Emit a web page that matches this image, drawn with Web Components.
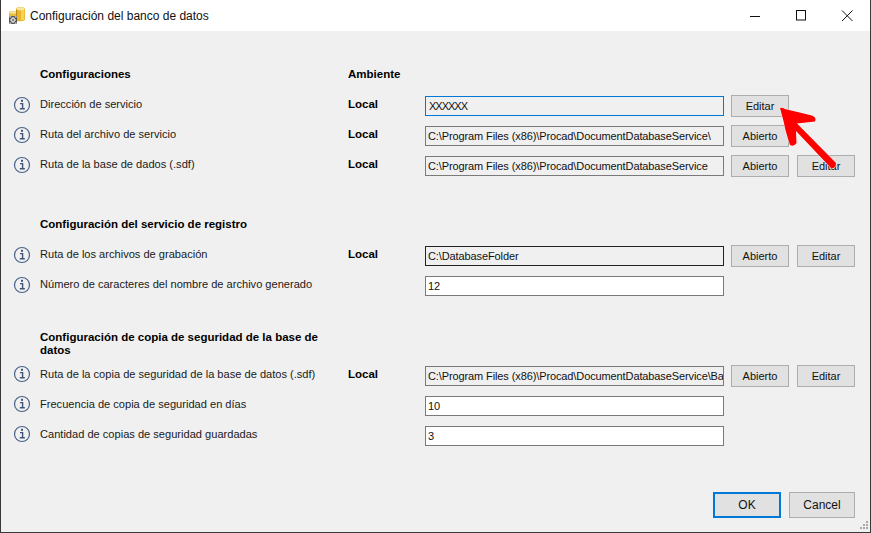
<!DOCTYPE html>
<html lang="es"><head><meta charset="utf-8"><title>Configuración del banco de datos</title>
<style>
html,body{margin:0;padding:0;width:871px;height:533px;overflow:hidden;background:#f0f0f0}
body{font:11px/16px "Liberation Sans",Arial,sans-serif;color:#000}
</style></head><body>
<cfg-window>
  <span slot="title">Configuración del banco de datos</span>
  <cfg-section style="padding-top:35px" col1="Configuraciones" col2="Ambiente" headh="16">
    <cfg-row label="Dirección de servicio" env="Local" value="XXXXXX" state="focus" edit1="Editar"></cfg-row>
    <cfg-row label="Ruta del archivo de servicio" env="Local" value="C:\Program Files (x86)\Procad\DocumentDatabaseService\" state="readonly" edit1="Abierto"></cfg-row>
    <cfg-row label="Ruta de la base de dados (.sdf)" env="Local" value="C:\Program Files (x86)\Procad\DocumentDatabaseService" state="readonly" edit1="Abierto" edit2="Editar"></cfg-row>
  </cfg-section>
  <cfg-section style="padding-top:35px" col1="Configuración del servicio de registro" headh="16">
    <cfg-row label="Ruta de los archivos de grabación" env="Local" value="C:\DatabaseFolder" state="dark" edit1="Abierto" edit2="Editar"></cfg-row>
    <cfg-row label="Número de caracteres del nombre de archivo generado" value="12"></cfg-row>
  </cfg-section>
  <cfg-section style="padding-top:29px;--icon-mt:-5px" col1="Configuración de copia de seguridad de la base de datos" headh="28">
    <cfg-row label="Ruta de la copia de seguridad de la base de datos (.sdf)" env="Local" value="C:\Program Files (x86)\Procad\DocumentDatabaseService\Ba" state="readonly" edit1="Abierto" edit2="Editar"></cfg-row>
    <cfg-row label="Frecuencia de copia de seguridad en días" value="10"></cfg-row>
    <cfg-row label="Cantidad de copias de seguridad guardadas" value="3"></cfg-row>
  </cfg-section>
</cfg-window>
<script>
class CfgWindow extends HTMLElement{constructor(){super();this.attachShadow({mode:'open'}).innerHTML=`
<style>
:host{display:flex;flex-direction:column;position:relative;box-sizing:border-box;width:871px;height:533px;border:1px solid #3a3a3a;border-top:0;background:#f0f0f0;overflow:hidden}
.bar{display:flex;align-items:center;height:31px;background:#fff;flex:none}
.logo{margin:1px 0 0 7px;width:18px;height:20px;flex:none}
.title{margin-left:4px;flex:1;font-size:12px;color:#111}
.ctl{width:46px;height:31px;display:flex;align-items:center;justify-content:center;flex:none}
.body{flex:1;min-height:0}
.foot{position:absolute;top:492px;left:712px;display:flex;gap:8px}
.arrow{position:absolute;left:769px;top:95px;width:70px;height:80px}
.grip{position:absolute;right:1px;bottom:2px;width:10px;height:10px}
</style>
<div class="bar">
<svg class="logo" viewBox="0 0 18 20"><path d="M1 6.500C1 5.500 2.800 5 5 5s4 .5 4 1.500V11H1z" fill="#e6bc3c"/><ellipse cx="5" cy="6.500" rx="3.500" ry="1.200" fill="#f6e59a"/><path d="M8 3c0-1.300 2-2 4.500-2S17 1.700 17 3v10.500c0 1-2 1.700-4.500 1.700H9V10H8z" fill="#e9b52a"/><path d="M13 3h3.300v11H13z" fill="#f5d259"/><path d="M8 3v7h1V4z" fill="#b98a14"/><ellipse cx="12.500" cy="2.800" rx="4" ry="1.500" fill="#f8e8a0"/><rect x="1" y="10" width="8" height="8" fill="#4f4f4f"/><path d="M5 10.800l3.200 3.200L5 17.200 1.800 14z" fill="#d9d9d9"/><path d="M1.300 10.800h2M6.700 10.800h2M1.300 17.200h2M6.700 17.200h2" stroke="#d9d9d9" stroke-width="1.200"/><rect x="4.200" y="13.200" width="1.600" height="1.600" fill="#4f4f4f"/></svg>
<span class="title"><slot name="title"></slot></span>
<span class="ctl"><svg width="12" height="12"><path d="M1 6.500h10" stroke="#111"/></svg></span>
<span class="ctl"><svg width="12" height="12"><rect x="1.500" y=".5" width="9" height="9.500" fill="none" stroke="#111"/></svg></span>
<span class="ctl"><svg width="12" height="12"><path d="M1 .5l10.500 10.500M11.500 .5L1 11" stroke="#111" fill="none"/></svg></span>
</div>
<div class="body"><slot></slot></div>
<div class="foot"><cfg-button primary style="width:68px;height:26px;font-size:12px">OK</cfg-button><cfg-button style="width:66px;height:26px;font-size:12px">Cancel</cfg-button></div>
<svg class="arrow" viewBox="0 0 70 80"><path d="M10 13Q12 12 15 14L42 20.500Q47 23 45 26.500L27 28.500 66 68Q66 74 61 73L26 36 26.500 48Q24 52 20 50 15 35 14 28z" fill="#f00" stroke="#fff" stroke-width=".8" stroke-linejoin="round" paint-order="stroke"/></svg>
<svg class="grip" viewBox="0 0 10 10" fill="#a8a8a8"><rect x="7" y="1" width="2" height="2"/><rect x="4" y="4" width="2" height="2"/><rect x="7" y="4" width="2" height="2"/><rect x="1" y="7" width="2" height="2"/><rect x="4" y="7" width="2" height="2"/><rect x="7" y="7" width="2" height="2"/></svg>`}}
customElements.define('cfg-window',CfgWindow);

class CfgSection extends HTMLElement{connectedCallback(){if(this.shadowRoot)return;
const r=this.attachShadow({mode:'open'});const c2=this.getAttribute('col2')||'';const h=+this.getAttribute('headh');
r.innerHTML=`<style>
:host{display:block;box-sizing:border-box}
.head{display:grid;grid-template-columns:285px auto;margin-left:39px;height:${h}px;font-weight:700;font-size:11.5px;line-height:13px;align-items:center;column-gap:23px;margin-bottom:9px}
.head.two{margin-bottom:3px}
</style><div class="head ${h>20?'two':''}"><span>${this.getAttribute('col1')}</span><span>${c2}</span></div><slot></slot>`}}
customElements.define('cfg-section',CfgSection);

class InfoIcon extends HTMLElement{constructor(){super();this.attachShadow({mode:'open'}).innerHTML=`<style>:host{display:block;width:18px;height:18px}svg{display:block}</style>
<svg width="18" height="18" viewBox="0 0 18 18"><circle cx="9" cy="9" r="7.500" fill="none" stroke="#4a6288" stroke-width="1.200"/><path d="M7 7.600h2.600v4.900M6.800 12.800h5" fill="none" stroke="#3f5478" stroke-width="1.400"/><rect x="8" y="3.800" width="2" height="2" fill="#3f5478"/></svg>`}}
customElements.define('info-icon',InfoIcon);

class CfgButton extends HTMLElement{constructor(){super();this.attachShadow({mode:'open'}).innerHTML=`<style>
:host{display:flex;box-sizing:border-box;width:58px;height:22px;align-items:center;justify-content:center;background:#e1e1e1;border:1px solid #adadad;font-size:11px;color:#111}
:host([primary]){border:2px solid #0078d7}
</style><slot></slot>`}}
customElements.define('cfg-button',CfgButton);

class CfgField extends HTMLElement{connectedCallback(){if(this.shadowRoot)return;this.attachShadow({mode:'open'}).innerHTML=`<style>
:host{display:flex;box-sizing:border-box;width:299px;height:20px;align-items:center;background:#fff;border:1px solid #7a7a7a;padding-left:2px;font-size:11px;letter-spacing:-.11px;color:#111;overflow:hidden;white-space:nowrap}
:host([state=readonly]){background:#f0f0f0}
:host([state=focus]){background:#f0f0f0;border-color:#0078d7;padding-left:3px;letter-spacing:-1px}
:host([state=dark]){background:#f0f0f0;border-color:#222}
</style><slot></slot>`}}
customElements.define('cfg-field',CfgField);

class CfgRow extends HTMLElement{connectedCallback(){if(this.shadowRoot)return;
const a=n=>this.getAttribute(n)||'';
this.attachShadow({mode:'open'}).innerHTML=`<style>
:host{display:grid;grid-template-columns:18px 317px 77px 299px 124px;height:30px;align-items:center;padding-left:12px}
.l{margin-left:9px;margin-top:-4px;white-space:nowrap;font-size:11.08px;color:#1a1a1a}
.e{font-weight:700;margin-top:-4px;font-size:11.5px}
info-icon{margin-top:var(--icon-mt,-2px)}
.btns{display:flex;gap:8px;margin-left:7px;width:124px}
</style><info-icon></info-icon><span class="l">${a('label')}</span><span class="e">${a('env')}</span><cfg-field state="${a('state')}">${a('value')}</cfg-field>
<div class="btns">${a('edit1')?`<cfg-button>${a('edit1')}</cfg-button>`:''}${a('edit2')?`<cfg-button>${a('edit2')}</cfg-button>`:''}</div>`}}
customElements.define('cfg-row',CfgRow);
</script>
</body></html>
